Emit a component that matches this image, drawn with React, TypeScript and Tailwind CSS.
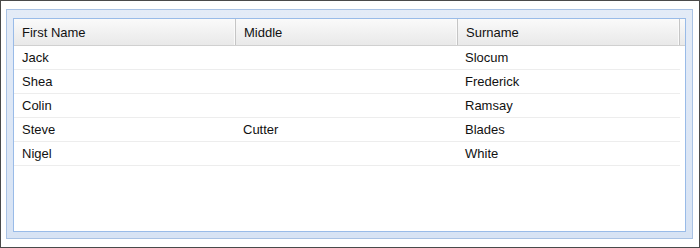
const rows = [
  { first: 'Jack', middle: '', last: 'Slocum' },
  { first: 'Shea', middle: '', last: 'Frederick' },
  { first: 'Colin', middle: '', last: 'Ramsay' },
  { first: 'Steve', middle: 'Cutter', last: 'Blades' },
  { first: 'Nigel', middle: '', last: 'White' },
];

const cols = ['First Name', 'Middle', 'Surname'];

export default function App() {
  return (
    <div
      className="w-[700px] h-[248px] border border-[#4a4a4a] bg-white pl-[5px] pt-[8px]"
      style={{ fontFamily: '"Liberation Sans", Arial, sans-serif' }}
    >
      <div className="w-[687px] h-[230px] border border-[#a9c2e4] bg-gradient-to-b from-[#e3ebf7] to-[#d7e3f4] px-[6px] pt-[8px] pb-[6px]">
        <div className="h-full border border-[#99bbe8] bg-white flex flex-col">
          <div className="h-[27px] flex border-b border-[#d0d0d0] bg-gradient-to-b from-[#fafafa] to-[#e9e9e9]">
            {cols.map((c) => (
              <div
                key={c}
                className="w-[222px] shrink-0 border-r border-[#c5c5c5] shadow-[inset_-1px_0_0_#fafafa] flex items-center pl-[8px] pt-[1px] text-[13px] text-[#111]"
              >
                {c}
              </div>
            ))}
          </div>
          {rows.map((r) => (
            <div key={r.first} className="w-[666px] h-[24px] flex border-b border-[#ededed] pt-[1px] text-[13px] text-[#111]">
              <div className="w-[222px] flex items-center pl-[8px]">{r.first}</div>
              <div className="w-[222px] flex items-center pl-[7px]">{r.middle}</div>
              <div className="w-[222px] flex items-center pl-[7px]">{r.last}</div>
            </div>
          ))}
        </div>
      </div>
    </div>
  );
}
